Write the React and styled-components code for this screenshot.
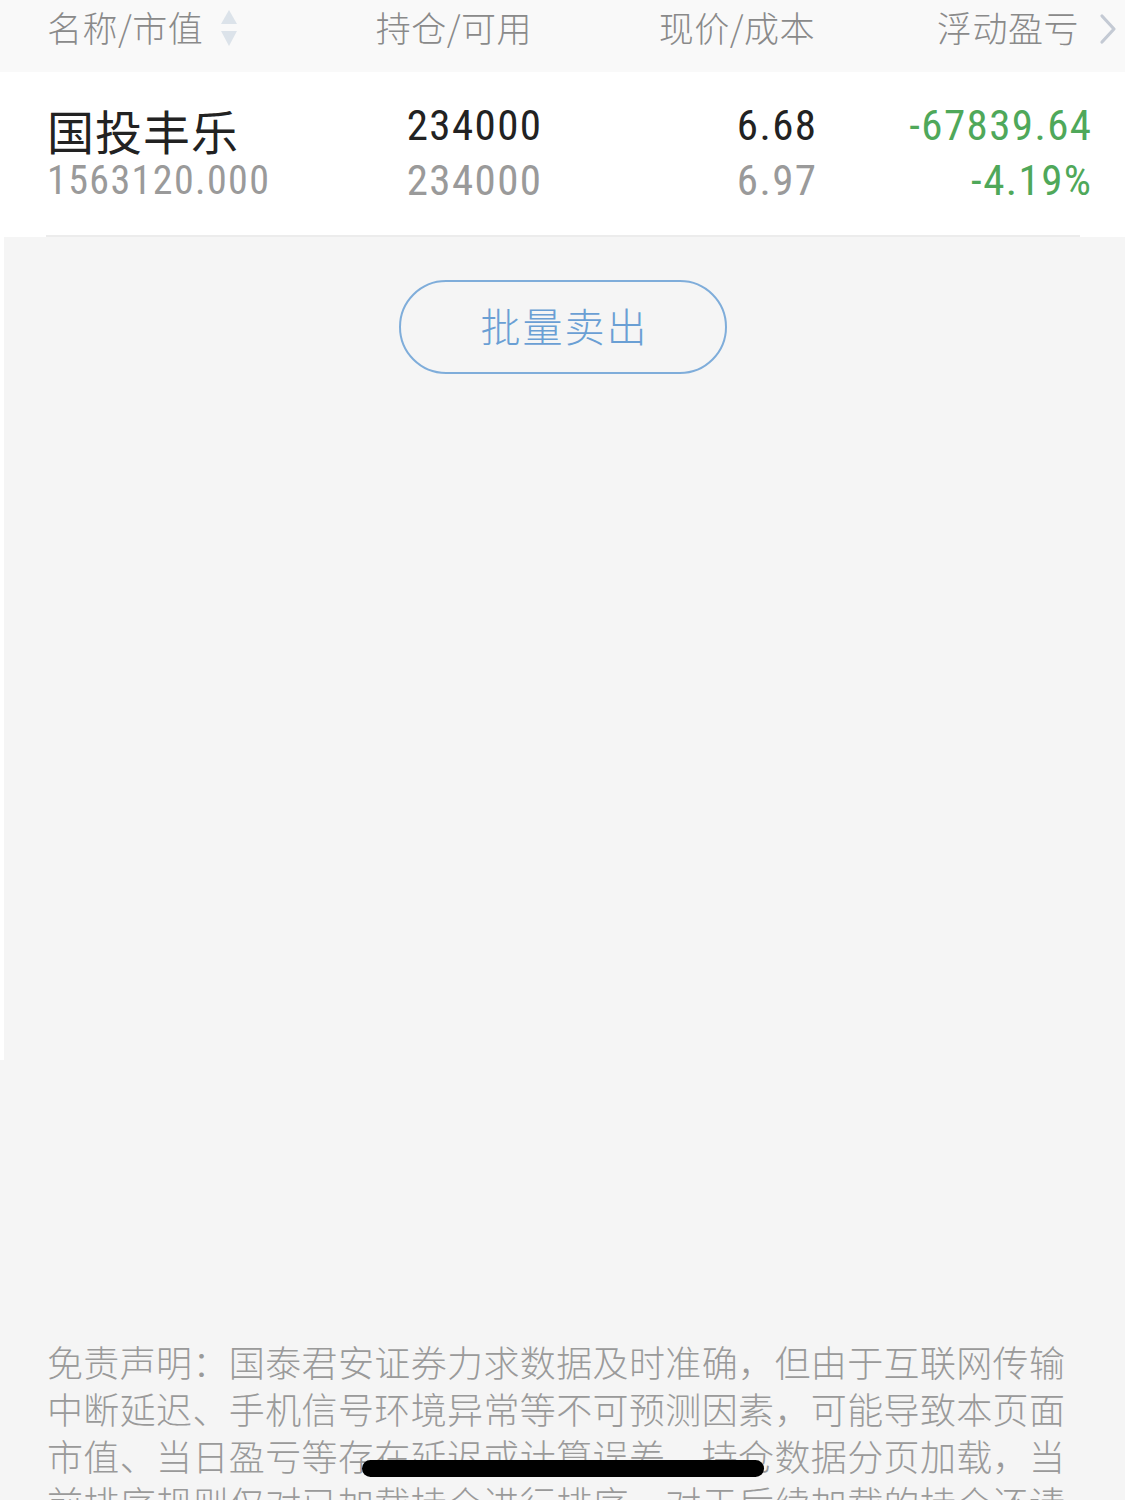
import React from "react";
import styled, { createGlobalStyle } from "styled-components";

const GlobalStyle = createGlobalStyle`
  html, body { margin: 0; padding: 0; background: #f5f5f5; }
  body { font-family: "Noto Sans CJK SC", "Noto Sans", sans-serif; }
  * { box-sizing: border-box; }
`;

const Page = styled.div`
  position: relative;
  width: 1125px;
  height: 1500px;
  overflow: hidden;
  background: #f5f5f5;
`;

const Header = styled.div`
  display: grid;
  grid-template-columns: 293px 192px 283px 302px;
  align-items: center;
  height: 72px;
  padding-left: 47px;
  background: #f9f9f9;
`;

const HeadCell = styled.div`
  display: flex;
  align-items: center;
  justify-content: ${(p) => (p.$left ? "flex-start" : "flex-end")};
  gap: ${(p) => p.$gap || 0}px;
  font-family: "Noto Sans CJK SC", sans-serif;
  font-weight: 300;
  font-size: 35px;
  letter-spacing: 0.5px;
  color: #8a8a8a;
  line-height: 1;
  margin-top: -20px;
`;

const Row = styled.div`
  display: grid;
  grid-template-columns: 293px 201px 275px 275px;
  align-items: start;
  height: 165px;
  padding-left: 47px;
  background: #ffffff;
  position: relative;
`;

const Divider = styled.div`
  position: absolute;
  left: 46px;
  right: 45px;
  bottom: 0;
  height: 2px;
  background: #ececec;
`;

const Col = styled.div`
  display: flex;
  flex-direction: column;
  align-items: ${(p) => (p.$left ? "flex-start" : "flex-end")};
  padding-top: ${(p) => p.$top}px;
`;

const StockName = styled.div`
  font-family: "Noto Sans CJK SC", sans-serif;
  font-size: 47px;
  letter-spacing: 1px;
  line-height: 56px;
  color: #222;
`;

const Num = styled.div`
  font-family: "Roboto", "Noto Sans", sans-serif;
  font-weight: 400;
  font-stretch: 87.5%;
  font-size: ${(p) => p.$size || 43}px;
  letter-spacing: 1.4px;
  line-height: ${(p) => p.$lh || 55}px;
  color: ${(p) => p.$color};
  margin-right: -1.4px;
`;

const ListArea = styled.div`
  min-height: 823px;
  border-left: 4px solid #ffffff;
  display: flex;
  justify-content: center;
  padding-top: 43px;
  padding-right: 4px;
  align-items: flex-start;
`;

const OutlineButton = styled.button`
  width: 328px;
  height: 94px;
  border: 2.5px solid #7fadda;
  border-radius: 47px;
  background: transparent;
  color: #6a9fd4;
  font-family: "Noto Sans CJK SC", sans-serif;
  font-weight: 300;
  font-size: 40px;
  letter-spacing: 2px;
  padding: 0 0 4px 4px;
  cursor: pointer;
`;

const Disclaimer = styled.p`
  margin: 278px 0 0;
  padding: 0 60px 0 47px;
  font-family: "Noto Sans CJK SC", sans-serif;
  font-weight: 300;
  font-size: 36px;
  line-height: 47px;
  color: #9a9a9a;
  text-align: justify;
`;

const HomeIndicator = styled.div`
  position: absolute;
  left: 362px;
  top: 1460px;
  width: 402px;
  height: 17px;
  border-radius: 9px;
  background: #000;
`;

const SortIcon = () => (
  <svg width="20" height="38" viewBox="0 0 20 38" style={{ marginLeft: 16, marginTop: 4 }}>
    <path d="M10 1 L18 15 L2 15 Z" fill="#dce3ea" />
    <path d="M10 37 L18 22 L2 22 Z" fill="#dce3ea" />
  </svg>
);

const Chevron = () => (
  <svg width="18" height="32" viewBox="0 0 18 32" style={{ marginTop: 6 }}>
    <path d="M3 3 L15 16 L3 29" fill="none" stroke="#c4cad4" strokeWidth="3.2" strokeLinecap="round" strokeLinejoin="round" />
  </svg>
);

export default function App() {
  return (
    <>
      <GlobalStyle />
      <Page>
        <Header>
          <HeadCell $left>
            名称/市值
            <SortIcon />
          </HeadCell>
          <HeadCell>持仓/可用</HeadCell>
          <HeadCell>现价/成本</HeadCell>
          <HeadCell $gap={20}>
            浮动盈亏
            <Chevron />
          </HeadCell>
        </Header>
        <Row>
          <Col $left $top={30}>
            <StockName>国投丰乐</StockName>
            <Num $size={40} $lh={46} $color="#9a9a9a">1563120.000</Num>
          </Col>
          <Col $top={26}>
            <Num $color="#222">234000</Num>
            <Num $color="#9a9a9a">234000</Num>
          </Col>
          <Col $top={26}>
            <Num $color="#222">6.68</Num>
            <Num $color="#9a9a9a">6.97</Num>
          </Col>
          <Col $top={26}>
            <Num $color="#4fa85a">-67839.64</Num>
            <Num $color="#4fa85a">-4.19%</Num>
          </Col>
          <Divider />
        </Row>
        <ListArea>
          <OutlineButton>批量卖出</OutlineButton>
        </ListArea>
        <Disclaimer>
          免责声明：国泰君安证券力求数据及时准确，但由于互联网传输中断延迟、手机信号环境异常等不可预测因素，可能导致本页面市值、当日盈亏等存在延迟或计算误差，持仓数据分页加载，当前排序规则仅对已加载持仓进行排序，对于后续加载的持仓还请刷新后重新排序。
        </Disclaimer>
        <HomeIndicator />
      </Page>
    </>
  );
}
